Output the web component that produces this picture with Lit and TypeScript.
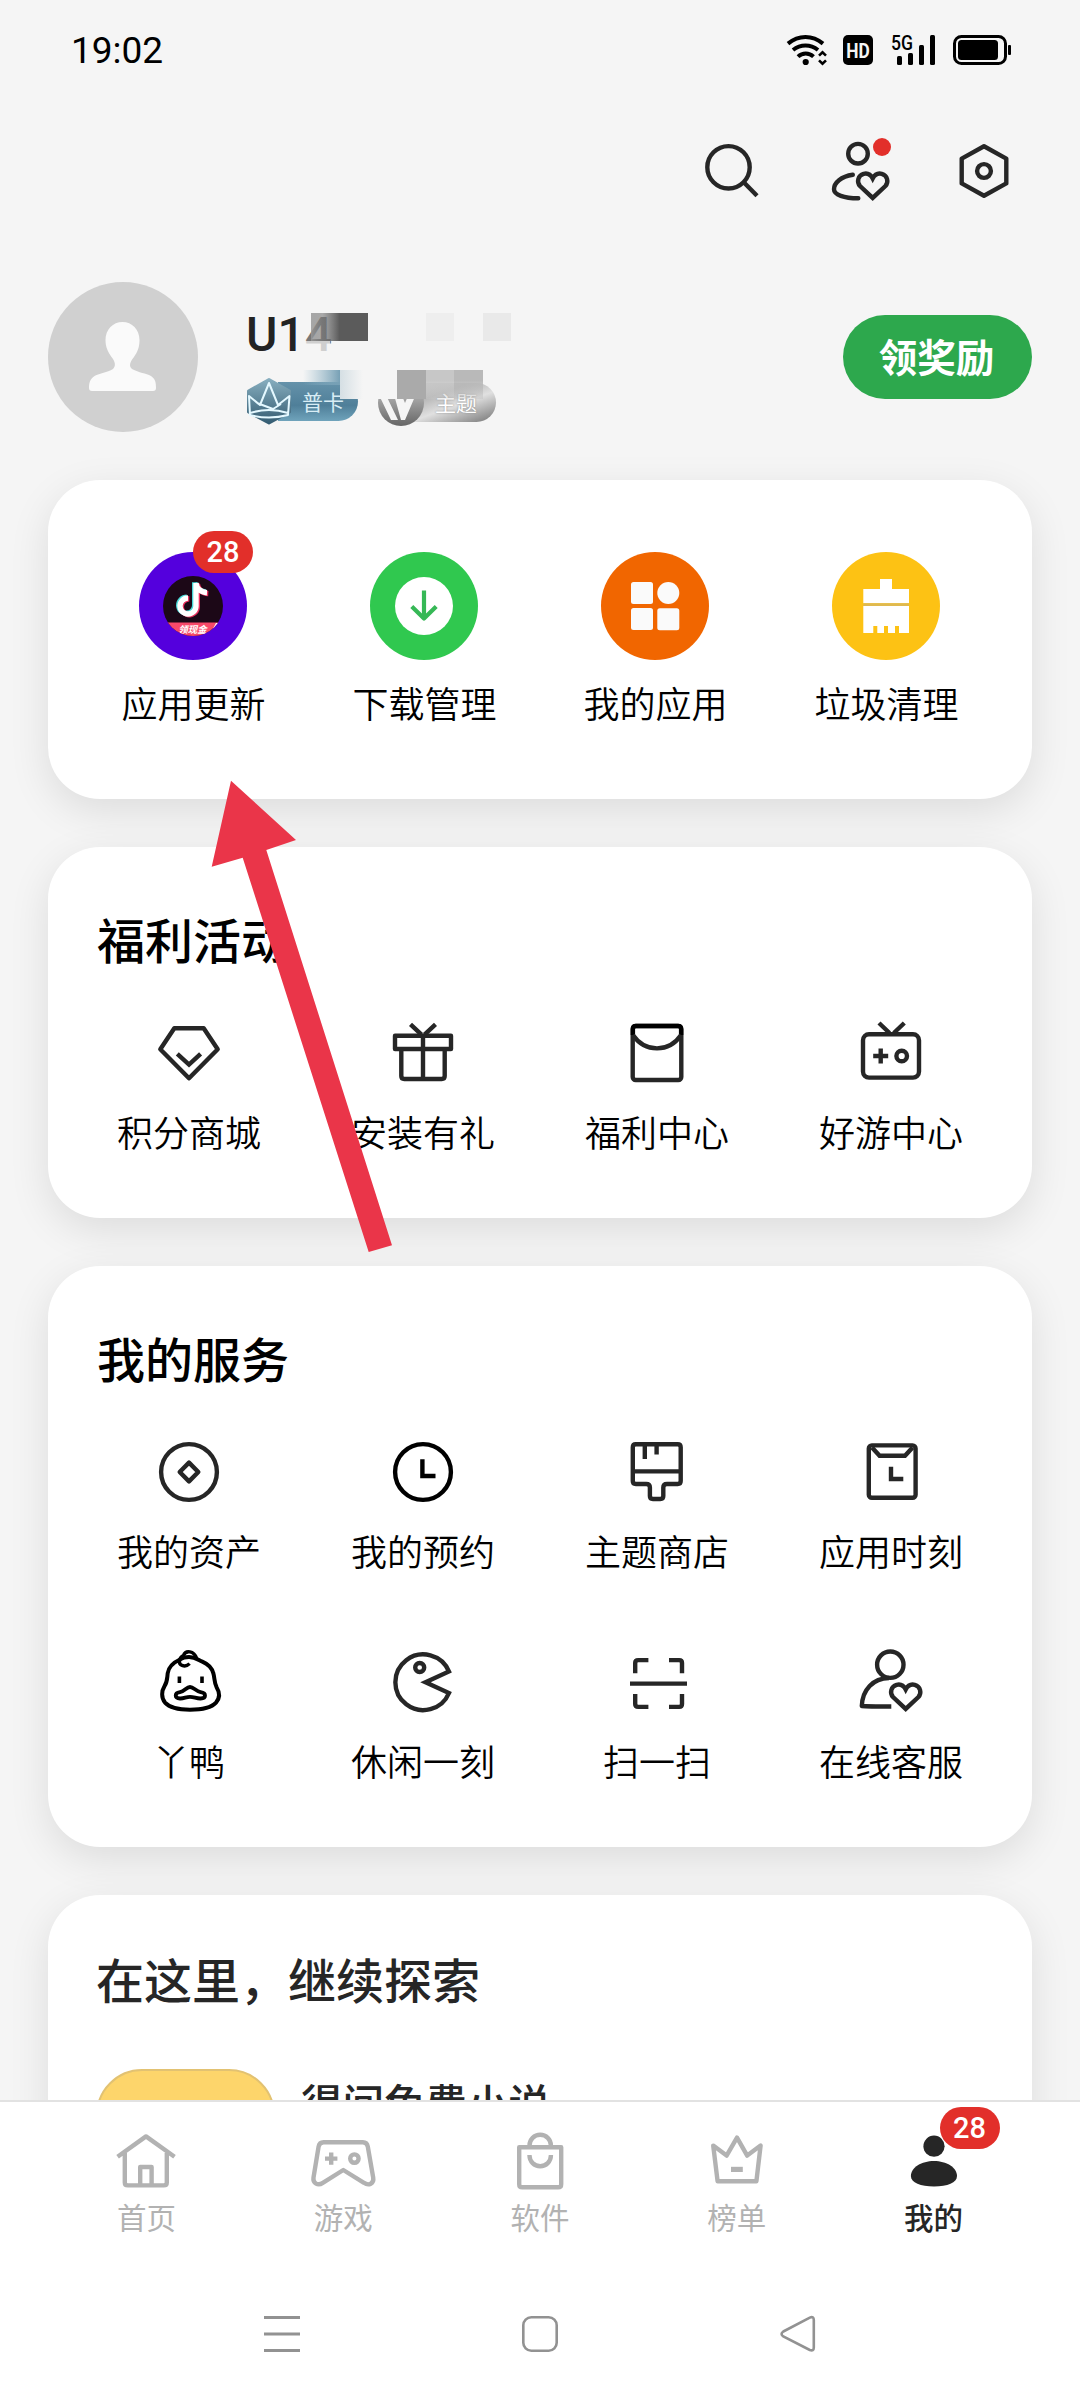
import { LitElement, html, svg, css, TemplateResult, SVGTemplateResult } from "lit";
import { customElement, property } from "lit/decorators.js";

const heart = svg`<path d="M50.7 43.4C48.6 39.4 45 38 41.6 38.8C36 40.4 34.4 47 38 51L50.7 62.9L63.4 51C67 47 65.4 40.4 59.8 38.8C56.4 38 52.8 39.4 50.7 43.4Z" stroke-linejoin="miter"/>`;

const icons: Record<string, SVGTemplateResult> = {
  search: svg`<circle cx="32.5" cy="32.3" r="21.2"/><path d="M47.5 47L61 60.8"/>`,
  fans: svg`<circle cx="36" cy="18.7" r="9.8"/><path d="M30.8 39.8C19 41.5 12 48 12 54.3C12 59.8 22 63.2 36.3 63.3" stroke-linecap="round"/>${heart}<circle cx="60" cy="12" r="9" fill="#e22f2a" stroke="none"/>`,
  settings: svg`<path d="M36 11.3L58.3 23.6V48.4L36 60.7L13.7 48.4V23.6Z"/><circle cx="36" cy="36" r="6.9"/>`,
  diamond: svg`<path d="M21.3 11.2H50.7L64.7 32.3L36 61.3L7.3 32.3Z"/><path d="M24.3 36.8L36 47.6L47.6 36.8" stroke-linejoin="miter"/>`,
  gift: svg`<rect x="8" y="18.8" width="56" height="13.2"/><path d="M14.3 32V59Q14.3 62 17.3 62H54.7Q57.7 62 57.7 59V32M36 18.8V62M23.5 7.3L34.5 17.6M48.5 7.3L37.5 17.6"/>`,
  envelope: svg`<rect x="11.7" y="9" width="48.6" height="54" rx="3"/><path stroke="#000" d="M11.9 18V12Q11.9 9 14.9 9H57.1Q60.1 9 60.1 12V18"/><path d="M11.9 18C24 35.8 48 35.8 60.1 18"/>`,
  console: svg`<rect x="8" y="17.2" width="56" height="43.4" rx="6"/><path d="M24 6L34.5 16M49.3 6L38.8 16M18.2 39H33.2M25.7 31.5V46.5"/><circle cx="46.7" cy="39" r="5.3"/>`,
  coin: svg`<circle cx="36" cy="36" r="27.9"/><path d="M36 26.6L45.3 36L36 45.4L26.7 36Z"/>`,
  clock: svg`<g stroke="#000"><circle cx="36" cy="36" r="27.9"/><path d="M35.4 23.3V40H48.5" stroke-linejoin="miter"/></g>`,
  brush: svg`<path d="M14.8 8.2H56.7Q59.7 8.2 59.7 11.2V45Q59.7 48 56.7 48H46Q42.3 48 42.3 51.4V60Q42.3 63 39.3 63H31.9Q28.9 63 28.9 60V51.4Q28.9 48 25.2 48H14.8Q11.8 48 11.8 45V11.2Q11.8 8.2 14.8 8.2ZM11.8 35.4H59.7M23.8 9V23M35.6 9V18.6"/>`,
  moment: svg`<rect x="13.8" y="9.4" width="46.8" height="52.4" rx="3"/><path d="M17 11.5L24.6 19.8H50L57.6 11.5M36 30.8V43H48.3" stroke-linejoin="miter"/>`,
  duck: svg`<g stroke="#000"><path stroke-width="4" d="M27 13.5C20.5 16.5 15.6 20.5 14.7 27.2C14 33 14.4 36 11.4 40.4C8.6 44.8 8 51.6 12 56.6C17 62 27 63.7 37 63.7S58 62 63 56.6C67.4 51.6 66.2 45.6 63.7 41.5C61 36.6 61.8 32 60.3 27.2C58.6 20.6 54 17.6 49.3 15.6C45 13.8 42.5 11 36 11C31.5 11 28.8 12.2 27 13.5Z"/><path stroke-width="3.4" d="M43.7 12.4C41 4.6 32.6 3.6 30.4 9.6C25.6 12.2 25.2 18 29 19.4C31.6 20.4 34.6 19.6 36.6 17.6"/><path stroke-width="3.8" d="M37 41C33.4 41 31.6 45.4 27 46.2C21 47.2 21.6 52.2 27 52.5C31 52.7 33 50.8 37 50.8S43.6 52.7 47.6 52.5C53.4 52.2 53.6 47.2 47.6 46.2C43 45.4 40.6 41 37 41Z"/></g><path stroke="none" fill="#000" d="M24.6 30.6H28.2V37H24.6ZM47.2 30.6H50.8V37H47.2Z"/>`,
  pacman: svg`<path d="M62 25.5A27.9 27.9 0 1 0 62 47L38.5 36.2Z" stroke-linejoin="miter"/><circle cx="32.7" cy="21.5" r="4.5"/>`,
  scan: svg`<path d="M14.2 27.3V17Q14.2 14.1 17.2 14.1H27.4M48 14.1H58.2Q61 14.1 61 17V27.3M61 48V58Q61 60.9 58.2 60.9H48M27.4 60.9H17.2Q14.2 60.9 14.2 58V48M9 37.6H66"/>`,
  service: svg`<circle cx="35.3" cy="18.7" r="13.2"/><path d="M34 32C18 32.4 7.5 43.5 6.8 60Q12 60.5 36.3 60.5"/>${heart}`,
  home: svg`<path d="M7.6 32.8L36 12.4L64.5 32.8M14.8 29V58.4Q14.8 61.4 17.8 61.4H53.8Q56.8 61.4 56.8 58.4V29M30.2 61V43H41.6V61" />`,
  game: svg`<path d="M16.6 18.2H55.9Q60 18.2 60.8 22.6L66.2 53.6C67.3 59.6 61.6 62.2 57 58.8L36.3 46L15.8 58.8C11 62 5.6 59.4 6.5 53.6L11.6 22.6Q12.4 18.2 16.6 18.2ZM18 34.6H30.4M24.2 28.4V40.8"/><circle cx="47.4" cy="34.6" r="4.2"/>`,
  bag: svg`<path d="M15.2 23.2H57.2V60.2Q57.2 63.3 54.2 63.3H18.2Q15.2 63.3 15.2 60.2ZM25.5 23V21.4A10.7 10.7 0 0 1 46.9 21.4V23M25.5 31V31.6A10.7 10.7 0 0 0 46.9 31.6V31"/>`,
  crown: svg`<path d="M12.2 21.6L25.6 31.6L36 13.6L46.2 31.6L59.6 21.6L55.4 57.2H16.6Z"/><path stroke="none" fill="currentColor" d="M30 42.8H41.8V48H30Z"/>`,
  me: svg`<g fill="currentColor" stroke="none"><circle cx="36" cy="22.2" r="10.6"/><path d="M12.9 52C12.9 43.4 23.6 37 36 37S59 43.4 59 52C59 59 49.4 62.4 36 62.4S12.9 59 12.9 52Z"/></g>`,
};

const glyph = (name: string) => html`<svg class="glyph" width="72" height="72" viewBox="0 0 72 72" fill="none" stroke="currentColor" stroke-width="4.4" stroke-linejoin="round">${icons[name]}</svg>`;

const glyphStyles = css`
  :host { display: block; }
  * { box-sizing: border-box; }
  svg { display: block; flex: none; overflow: visible; }
  .badge {
    position: absolute;
    width: 60px; height: 42px; border-radius: 21px;
    background: #e22f2a; color: #fff;
    font: 500 29px/43px Roboto, sans-serif;
    text-align: center;
  }
`;

@customElement("status-bar")
class StatusBar extends LitElement {
  static styles = [glyphStyles, css`
    .bar { display: flex; justify-content: space-between; height: 100px; padding: 0 69px 0 71px; align-items: center; }
    .time { font: 400 37px/44px Roboto, sans-serif; color: #000; padding-top: 1px; }
    .tray { display: flex; gap: 18px; align-items: center; }
  `];
  render() {
    return html`<div class="bar">
      <span class="time">19:02</span>
      <div class="tray">
        <svg width="38" height="30" viewBox="0 0 38 30" fill="none" stroke="#000" stroke-width="4">
          <path d="M1 8.6C11.5 -.3 25.5 -.3 36 8.6M6 15C13.5 9 23.5 9 31 15M11 21.6C15.5 17.4 22 17.4 26.5 21.6"/>
          <circle cx="18.7" cy="27" r="3.1" fill="#000" stroke="none"/>
          <path d="M32 20.6L35.5 17.2L39 20.6M32 25.4L35.5 28.8L39 25.4" stroke-width="2.6"/>
        </svg>
        <svg width="30" height="30" viewBox="0 0 30 30">
          <rect width="30" height="30" rx="5"/>
          <text x="15" y="22.6" text-anchor="middle" font-family="Roboto, sans-serif" font-weight="700" font-size="21" textLength="23.5" lengthAdjust="spacingAndGlyphs" fill="#f5f5f5">HD</text>
        </svg>
        <svg width="44" height="30" viewBox="0 0 44 30">
          <text x="0" y="14.5" font-family="Roboto, sans-serif" font-weight="500" font-size="20" textLength="22" lengthAdjust="spacingAndGlyphs">5G</text>
          <rect x="6" y="21" width="5" height="9" rx="1.5"/><rect x="17" y="18" width="5" height="12" rx="1.5"/>
          <rect x="28" y="10" width="5" height="20" rx="1.5"/><rect x="39" y="0" width="5" height="30" rx="1.5"/>
        </svg>
        <svg width="58" height="30" viewBox="0 0 58 30">
          <rect x="1.5" y="1.5" width="51" height="27" rx="7" fill="none" stroke="#000" stroke-width="3"/>
          <rect x="5" y="5" width="40" height="20" rx="3.5"/><rect x="55" y="10" width="3" height="10" rx="1"/>
        </svg>
      </div>
    </div>`;
  }
}

@customElement("profile-header")
class ProfileHeader extends LitElement {
  static styles = [glyphStyles, css`
    .tools { display: flex; justify-content: flex-end; align-items: center; gap: 54px; height: 142px; padding-right: 60px; color: #262626; }
    .profile { display: flex; height: 238px; padding: 40px 48px 48px; }
    .who { display: flex; flex-direction: column; margin-left: 48px; padding-top: 25px; flex: 1; position: relative; }
    .name { font: 500 48px/56px Roboto, sans-serif; color: #232323; }
    .fade { color: #777; }
    .ranks { display: flex; margin-top: 7px; height: 60px; align-items: center; }
    .rank { display: flex; align-items: center; height: 60px; color: #fff; font: 400 21px/24px "Noto Sans CJK SC", sans-serif; }
    .card-rank { width: 132px; }
    .plate { display: flex; align-items: center; height: 39px; border-radius: 0 20px 20px 0; }
    .card-rank .crest { margin-top: 2px; }
    .card-rank .plate { width: 80px; margin-left: -14px; padding-left: 24px; margin-top: 2px; background: linear-gradient(180deg, #6592aa, #4f7f99 60%, #6fa3bb); color: #d8edf5; }
    .theme-rank .plate { width: 84px; margin-left: -12px; padding-left: 23px; margin-top: 4px; background: linear-gradient(160deg, #c8c8c8, #b8b8b8 30%, #e0e0e0 55%, #8c8c8c 90%); color: #fff; }
    .theme-rank { text-shadow: 0 0 2px #888; }
    .crest { position: relative; z-index: 1; }
    .mosaic { position: absolute; z-index: 2; left: 0; top: 24px; pointer-events: none; }
    .reward { align-self: flex-start; margin-top: 33px; width: 189px; height: 84px; border-radius: 42px; background: #2da84d; color: #fff; font: 700 38.5px/81px "Noto Sans CJK SC", sans-serif; text-align: center; padding-right: 2px; }
  `];
  render() {
    return html`
      <div class="tools">${["search", "fans", "settings"].map(glyph)}</div>
      <div class="profile">
        <svg width="150" height="150" viewBox="0 0 150 150">
          <circle cx="75" cy="75" r="75" fill="#d0d0d0"/>
          <path fill="#fafafa" d="M74.5 40C84 40 91.5 47.5 91.5 58C91.5 65 89.5 70 86 75C82 80 80.5 84 84 87C91 91 98 91 103 94C107.5 97 108 101 108 106Q108 109 105 109H44Q41 109 41 106C41 101 42 97 46.5 94C52 91 59 90.5 65 87C68 84 67.5 80 63.5 75C60 70 57.5 65 57.5 58C57.5 47.5 65 40 74.5 40Z"/>
        </svg>
        <div class="who">
          <div class="name">U1<span class="fade">4</span></div>
          <div class="ranks">
            <div class="rank card-rank">
              <svg class="crest" width="46" height="48" viewBox="0 0 46 48">
                <defs><linearGradient id="hex" x1="0" y1="0" x2="0" y2="1"><stop offset="0" stop-color="#86adbe"/><stop offset="1" stop-color="#355d73"/></linearGradient></defs>
                <path fill="url(#hex)" stroke="url(#hex)" stroke-width="3" stroke-linejoin="round" d="M23 2.5L43.5 14V35L23 46L2.5 35V14Z"/>
                <path fill="none" stroke="#e4f8ff" stroke-width="2" stroke-linejoin="round" d="M3 19L14 28L23 6L32 28L43.5 19L42 38Q23 43 4 38ZM11 26L27 32L35 27M4 36Q23 30 42 36"/>
              </svg>
              <div class="plate"><span>普卡</span></div>
            </div>
            <div class="rank theme-rank">
              <svg class="crest" width="46" height="46" viewBox="0 0 46 46">
                <defs><linearGradient id="disc" x1="0" y1="0" x2="0" y2="1"><stop offset="0" stop-color="#f0f0f0"/><stop offset=".35" stop-color="#aaa"/><stop offset="1" stop-color="#666"/></linearGradient></defs>
                <circle cx="23" cy="26" r="23" fill="url(#disc)"/>
                <path fill="#f5f5f5" d="M1 18L6 14L20 43H13ZM15 14H22L27 26L33 12L41 10L27 43H23Z"/>
              </svg>
              <div class="plate"><span>主题</span></div>
            </div>
          </div>
          <svg class="mosaic" width="270" height="126" viewBox="0 0 270 126">
            <defs>
              <linearGradient id="dark"><stop offset="0" stop-color="#999" stop-opacity=".85"/><stop offset=".2" stop-color="#777" stop-opacity=".6"/><stop offset=".5" stop-color="#5b5b5b"/></linearGradient>
              <linearGradient id="blue" x1="0" y1="0" x2="1" y2="0"><stop offset="0" stop-color="#8db4c7" stop-opacity="0"/><stop offset="1" stop-color="#77a0b5"/></linearGradient>
              <linearGradient id="pale" x1="0" y1="0" x2="1" y2="0"><stop offset="0" stop-color="#d5dfe4"/><stop offset=".4" stop-color="#f5f5f5"/></linearGradient>
              <linearGradient id="ash" x1="0" y1="0" x2="0" y2="1"><stop offset=".35" stop-color="#c7c7c7"/><stop offset="1" stop-color="#c7c7c7" stop-opacity=".3"/></linearGradient>
              <linearGradient id="stone" x1="0" y1="0" x2="0" y2="1"><stop offset=".35" stop-color="#b9b9b9"/><stop offset="1" stop-color="#b9b9b9" stop-opacity=".3"/></linearGradient>
            </defs>
            <path fill="#f5f5f5" fill-opacity=".7" d="M58 35H84V46H58Z"/>
            <path fill="url(#dark)" d="M65 7H122V35H65Z"/>
            <path fill="#eee" d="M180 7H208V35H180Z"/><path fill="#e9e9e9" d="M237 7H265V35H237Z"/>
            <path fill="url(#blue)" d="M57 64H94V79H57Z"/>
            <path fill="url(#pale)" d="M94 64H151V93H94Z"/>
            <path fill="#aaa" d="M151 64H180V93H151Z"/><path fill="url(#ash)" d="M180 64H208V93H180Z"/><path fill="url(#stone)" d="M208 64H237V93H208Z"/>
          </svg>
        </div>
        <div class="reward">领奖励</div>
      </div>`;
  }
}

const note = svg`<path d="M57 31V54A8 8 0 1 1 49 46M57 31C57.5 36.5 62 40.5 68 40.8"/>`;

const discs: { label: string; color: string; art: SVGTemplateResult; count?: number }[] = [
  {
    label: "应用更新", color: "#5400dd", count: 28,
    art: svg`<clipPath id="app"><circle cx="54" cy="54" r="30"/></clipPath>
      <g clip-path="url(#app)"><rect x="24" y="24" width="60" height="60" fill="#1c0817"/>
      <g fill="none" stroke-width="5.4"><g stroke="#46d9d8" transform="translate(-1.3 -.8)">${note}</g><g stroke="#e8305e" transform="translate(1.3 .8)">${note}</g><g stroke="#fff">${note}</g></g>
      <path fill="#f8496a" d="M24 70.5H84V84H24Z"/><path fill="#fff" d="M70 84L77 71H84Z"/>
      <text x="53.5" y="80.5" font-size="9.5" font-weight="700" font-style="italic" font-family="Noto Sans CJK SC, sans-serif" text-anchor="middle" fill="#fff">领现金</text></g>`,
  },
  {
    label: "下载管理", color: "#30c84f",
    art: svg`<circle cx="54" cy="54" r="29" fill="#fff"/><path d="M54 38.6V66M41.8 54.5L54 66.6L66.2 54.5" fill="none" stroke="#36b856" stroke-width="4.2" stroke-linejoin="round"/>`,
  },
  {
    label: "我的应用", color: "#f16600",
    art: svg`<g fill="#fafafa"><rect x="30" y="30" width="22" height="22" rx="2.5"/><rect x="30" y="56" width="22" height="22" rx="2.5"/><rect x="56.3" y="56.3" width="22" height="22" rx="2.5"/><circle cx="67.3" cy="41" r="11"/></g>`,
  },
  {
    label: "垃圾清理", color: "#fdc214",
    art: svg`<path fill="#fff" d="M48 27H60V37H77V51.3H31.3V37H48ZM31.3 54H77V81H67V74H63V81H56V74H52V81H45.3V74H41.3V81H31.3Z"/><path fill="#dfb94f" d="M31.3 51.3H77V54H31.3Z"/>`,
  },
];

@customElement("quick-actions")
class QuickActions extends LitElement {
  static styles = [glyphStyles, css`
    .grid { display: grid; grid-template-columns: repeat(4, 231px); padding: 72px 0 70px 30px; }
    .item { display: flex; flex-direction: column; align-items: center; gap: 16px; }
    .disc { position: relative; width: 108px; height: 108px; margin-right: 1px; }
    .badge { left: 54px; top: -21px; }
    .label { font-size: 36px; line-height: 52px; font-weight: 350; }
  `];
  render() {
    return html`<div class="grid">${discs.map((d) => html`
      <div class="item">
        <div class="disc">
          <svg width="108" height="108" viewBox="0 0 108 108"><circle cx="54" cy="54" r="54" fill=${d.color}/>${d.art}</svg>
          ${d.count ? html`<span class="badge">${d.count}</span>` : null}
        </div>
        <span class="label">${d.label}</span>
      </div>`)}</div>`;
  }
}

@customElement("service-section")
class ServiceSection extends LitElement {
  @property() heading = "";
  @property({ attribute: false }) items: [string, string][] = [];
  static styles = [glyphStyles, css`
    .section { display: flex; flex-direction: column; padding: 55px 24px 60px; }
    .title { margin: 0 0 43px 25px; font-size: 48px; line-height: 72px; font-weight: 500; }
    .grid { display: grid; grid-template-columns: repeat(4, 234px); row-gap: 70px; }
    .item { display: flex; flex-direction: column; align-items: center; gap: 16px; }
    .glyph { color: #262626; }
    .label { font-size: 36px; line-height: 52px; font-weight: 350; }
  `];
  render() {
    return html`<div class="section">
      <div class="title">${this.heading}</div>
      <div class="grid">${this.items.map(([icon, label]) => html`<div class="item">${glyph(icon)}<span class="label">${label}</span></div>`)}</div>
    </div>`;
  }
}

@customElement("tab-bar")
class TabBar extends LitElement {
  static styles = [glyphStyles, css`
    .tabs { display: grid; grid-template-columns: repeat(5, 1fr); height: 174px; padding: 22px 48px 0; border-top: 2px solid #e2e2e2; background: #fff; }
    .tab { display: flex; flex-direction: column; align-items: center; color: #b2b2b2; font-size: 29.5px; line-height: 40px; }
    .pic { position: relative; }
    .current { color: #262626; font-weight: 500; }
    .badge { left: 42px; top: -17px; }
    .system { display: flex; justify-content: center; gap: 222px; height: 126px; padding-top: 42px; background: #fff; }
  `];
  render() {
    const tabs: [string, string][] = [["home", "首页"], ["game", "游戏"], ["bag", "软件"], ["crown", "榜单"], ["me", "我的"]];
    return html`
      <div class="tabs">${tabs.map(([icon, label]) => html`
        <div class="tab ${icon === "me" ? "current" : ""}">
          <div class="pic">${glyph(icon)}${icon === "me" ? html`<span class="badge">28</span>` : null}</div>
          <span>${label}</span>
        </div>`)}</div>
      <div class="system">
        <svg width="36" height="36" fill="none" stroke="#929292" stroke-width="3"><path d="M0 1.5H36M0 18H36M0 34.5H36"/></svg>
        <svg width="36" height="36" fill="none" stroke="#929292" stroke-width="2.6"><rect x="1.3" y="1.3" width="33.4" height="33.4" rx="8"/></svg>
        <svg width="36" height="36" fill="none" stroke="#929292" stroke-width="2.6"><path transform="translate(1.3 0)" d="M2 15.5L28.5 1.6Q32.5 0 32.5 4V31.5Q32.5 35.5 28.5 34L2 20.5Q-1.5 18 2 15.5Z"/></svg>
      </div>`;
  }
}

@customElement("app-root")
class AppRoot extends LitElement {
  static styles = css`
    :host { display: block; font-family: "Noto Sans CJK SC", sans-serif; color: #000; }
    .screen { position: relative; display: flex; flex-direction: column; width: 1080px; height: 2400px; overflow: hidden; background: #f5f5f5; }
    .content { flex: 1; min-height: 0; overflow: hidden; display: flex; flex-direction: column; }
    .cards { display: flex; flex-direction: column; gap: 48px; padding: 0 48px; }
    .card { flex: none; border-radius: 52px; background: #fff; box-shadow: 0 12px 40px rgba(0, 0, 0, .1); }
    .quick { height: 319px; }
    .welfare { height: 371px; }
    .services { height: 581px; }
    .explore { height: 500px; padding: 47px 48px 0; color: #262626; }
    .explore-title { font-size: 48px; line-height: 72px; font-weight: 500; }
    .app { display: flex; gap: 26px; margin-top: 55px; }
    .app-icon { box-sizing: border-box; width: 179px; height: 179px; border-radius: 46px; border: 2px solid #e2c272; background: #fdd56b; }
    .app-name { padding-top: 3px; font-size: 41.5px; line-height: 60px; font-weight: 500; }
    .pointer { position: absolute; left: 0; top: 0; pointer-events: none; }
  `;
  render(): TemplateResult {
    return html`<div class="screen">
      <div class="content">
        <status-bar></status-bar>
        <profile-header></profile-header>
        <div class="cards">
          <div class="card quick"><quick-actions></quick-actions></div>
          <div class="card welfare"><service-section heading="福利活动" .items=${[["diamond", "积分商城"], ["gift", "安装有礼"], ["envelope", "福利中心"], ["console", "好游中心"]]}></service-section></div>
          <div class="card services"><service-section heading="我的服务" .items=${[["coin", "我的资产"], ["clock", "我的预约"], ["brush", "主题商店"], ["moment", "应用时刻"], ["duck", "丫鸭"], ["pacman", "休闲一刻"], ["scan", "扫一扫"], ["service", "在线客服"]]}></service-section></div>
          <div class="card explore">
            <div class="explore-title">在这里，继续探索</div>
            <div class="app"><div class="app-icon"></div><div class="app-name">得间免费小说</div></div>
          </div>
        </div>
      </div>
      <tab-bar></tab-bar>
      <svg class="pointer" width="1080" height="2400"><path fill="#ea3549" d="M231 780.7L296 840L266.3 850L392 1245.3L368.7 1252L242.7 857.7L211.7 866.7Z"/></svg>
    </div>`;
  }
}
